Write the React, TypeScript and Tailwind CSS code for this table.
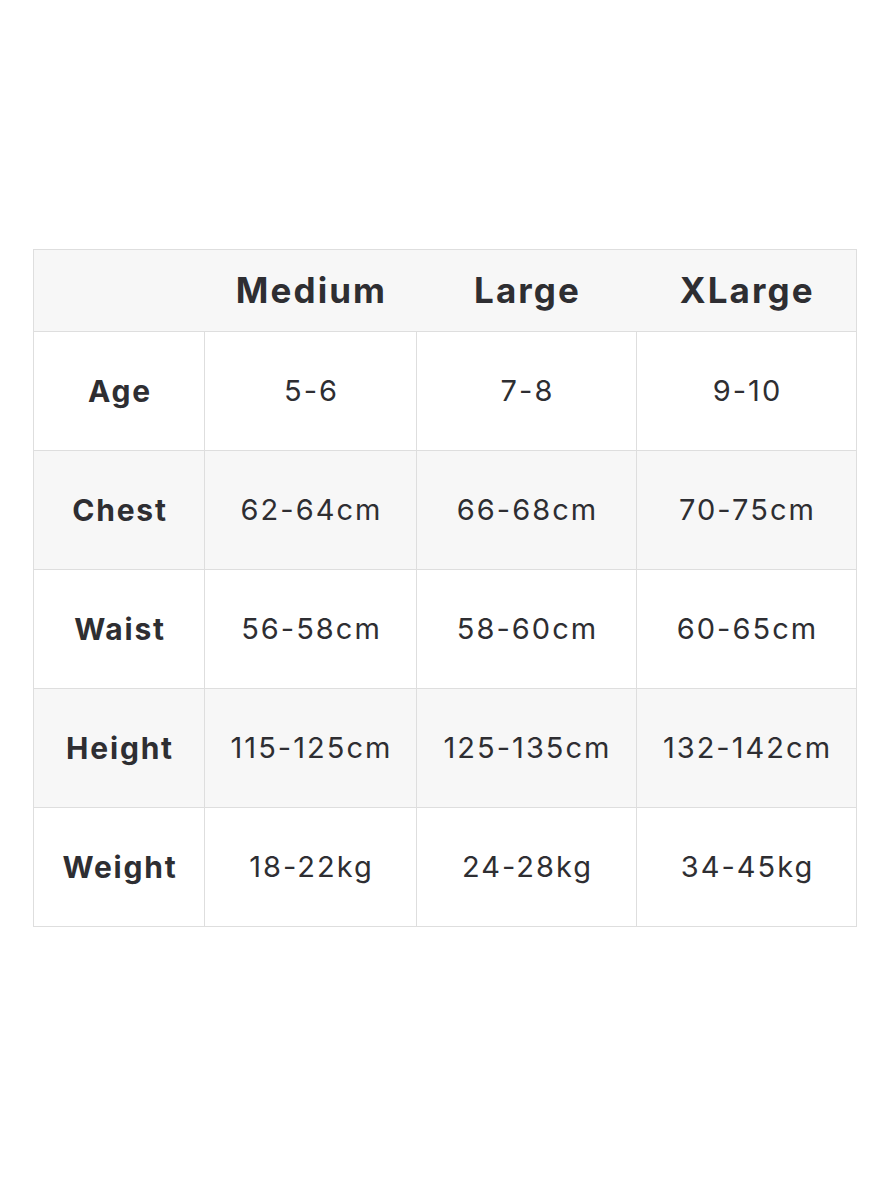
import React from "react";

const sizes = ["Medium", "Large", "XLarge"];

const rows = [
  { label: "Age", values: ["5-6", "7-8", "9-10"] },
  { label: "Chest", values: ["62-64cm", "66-68cm", "70-75cm"] },
  { label: "Waist", values: ["56-58cm", "58-60cm", "60-65cm"] },
  { label: "Height", values: ["115-125cm", "125-135cm", "132-142cm"] },
  { label: "Weight", values: ["18-22kg", "24-28kg", "34-45kg"] },
];

export default function App() {
  return (
    <div
      className="w-[889px] h-[1200px] bg-white pt-[249px] pl-[33px]"
      style={{ fontFamily: "Inter, 'Noto Sans', sans-serif" }}
    >
      <table className="w-[823px] border-collapse text-[#2e2e32] table-fixed">
        <colgroup>
          <col className="w-[171px]" />
          <col className="w-[212px]" />
          <col className="w-[220px]" />
          <col className="w-[220px]" />
        </colgroup>
        <thead>
          <tr className="h-[82px] bg-[#f7f7f7] border border-[#dedede]">
            <th />
            {sizes.map((s) => (
              <th
                key={s}
                className="text-[35px] font-bold text-center tracking-[0.06em] pl-[2px]"
              >
                {s}
              </th>
            ))}
          </tr>
        </thead>
        <tbody>
          {rows.map((r, i) => (
            <tr
              key={r.label}
              className={`h-[119px] ${i % 2 === 1 ? "bg-[#f7f7f7]" : "bg-white"}`}
            >
              <td className="border border-[#dedede] text-center text-[30px] font-bold tracking-[0.06em] pl-[2px]">
                {r.label}
              </td>
              {r.values.map((v) => (
                <td
                  key={v}
                  className="border border-[#dedede] text-center text-[29px] font-normal tracking-[0.07em] pl-[2px]"
                >
                  {v}
                </td>
              ))}
            </tr>
          ))}
        </tbody>
      </table>
    </div>
  );
}
